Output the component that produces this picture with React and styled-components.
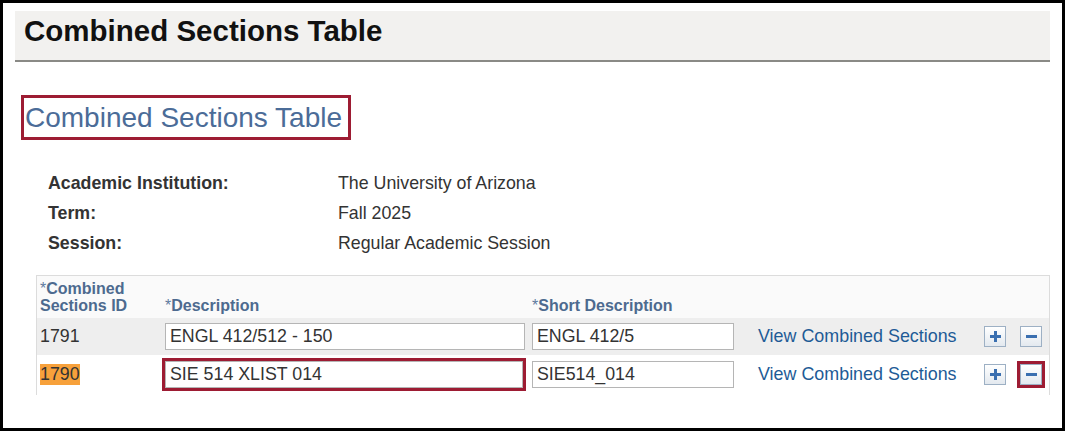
import React from "react";
import styled, { createGlobalStyle } from "styled-components";

const Global = createGlobalStyle`
  html, body { margin: 0; padding: 0; background: #fff; }
  body { font-family: "Liberation Sans", Arial, sans-serif; }
`;

const Frame = styled.div`
  width: 1065px;
  height: 431px;
  box-sizing: border-box;
  border: 3px solid #000;
  padding: 8px 12px 0 12px;
  overflow: hidden;
`;

const PageHeader = styled.div`
  width: 1035px;
  height: 51px;
  box-sizing: border-box;
  background: #f2f1ef;
  border-bottom: 2px solid #8a8a86;
  display: flex;
  align-items: center;
  padding: 0 0 9px 9px;
`;

const PageTitle = styled.h1`
  margin: 0;
  font-size: 29.5px;
  font-weight: bold;
  color: #111;
  line-height: 32px;
`;

const Highlight = styled.div`
  display: inline-block;
  margin: 33px 0 0 6px;
  border: 3px solid #9d1c33;
  padding: 4px 6px 4px 1px;
`;

const SectionTitle = styled.h2`
  margin: 0;
  font-size: 28px;
  font-weight: normal;
  color: #4b6c98;
  line-height: 31px;
`;

const Info = styled.div`
  display: grid;
  grid-template-columns: 290px auto;
  row-gap: 8.5px;
  margin: 33px 0 0 33px;
  font-size: 17.8px;
  line-height: 21.5px;
`;

const Label = styled.div`
  font-weight: bold;
  color: #333;
`;

const Value = styled.div`
  color: #333;
`;

const Grid = styled.div`
  margin: 20px 0 0 21px;
  width: 1014px;
  box-sizing: border-box;
  border: 1px solid #dcdcdc;
  border-bottom: none;
`;

const HeadRow = styled.div`
  display: flex;
  align-items: flex-end;
  height: 42px;
  background: #fafafa;
  padding-bottom: 4px;
  box-sizing: border-box;
`;

const Row = styled.div`
  display: flex;
  align-items: center;
  height: ${(p) => p.$h}px;
  background: ${(p) => (p.$alt ? "#eeeeee" : "#fff")};
`;

const Cell = styled.div`
  width: ${(p) => p.$w}px;
  flex: none;
  box-sizing: border-box;
  padding-left: ${(p) => p.$pl || 0}px;
  display: flex;
  align-items: center;
`;

const HeadCell = styled.div`
  width: ${(p) => p.$w}px;
  flex: none;
  box-sizing: border-box;
  padding-left: ${(p) => p.$pl || 0}px;
  font-size: 16px;
  font-weight: bold;
  color: #4d6a8f;
  line-height: 17px;
`;

const Star = styled.span`
  font-weight: normal;
  color: #5f7b9f;
`;

const IdText = styled.span`
  font-size: 17.8px;
  color: #333;
  background: ${(p) => (p.$mark ? "#f7a13b" : "transparent")};
  line-height: 21px;
`;

const Field = styled.div`
  box-sizing: border-box;
  width: ${(p) => p.$w}px;
  height: 27px;
  border: 1px solid #b5b5b5;
  background: #fff;
  font-size: 17.8px;
  color: #333;
  padding-left: 4px;
  display: flex;
  align-items: center;
`;

const RedWrap = styled.div`
  border: 3px solid #9d1c33;
  padding: 0;
  margin-left: ${(p) => p.$ml || 0}px;
  display: flex;
`;

const Link = styled.a`
  font-size: 17.9px;
  color: #1e5b96;
  text-decoration: none;
`;

const Btn = styled.div`
  width: 22px;
  height: 21px;
  box-sizing: border-box;
  border: 1px solid #9db0c4;
  background: linear-gradient(#ffffff, #e3e9ef);
  display: flex;
  align-items: center;
  justify-content: center;
`;

const BtnBox = styled.div`
  display: flex;
  align-items: center;
  padding: ${(p) => (p.$red ? "0" : "3px")};
  border: ${(p) => (p.$red ? "3px solid #9d1c33" : "0")};
`;

const Buttons = styled.div`
  display: flex;
  align-items: center;
  gap: 8px;
`;

const Plus = () => (
  <svg width="13" height="13" viewBox="0 0 13 13">
    <rect x="5" y="1" width="3" height="11" fill="#3a6fb0" />
    <rect x="1" y="5" width="11" height="3" fill="#3a6fb0" />
  </svg>
);

const Minus = () => (
  <svg width="13" height="13" viewBox="0 0 13 13">
    <rect x="1" y="5" width="11" height="3" fill="#3a6fb0" />
  </svg>
);

export default function App() {
  return (
    <>
      <Global />
      <Frame>
        <PageHeader>
          <PageTitle>Combined Sections Table</PageTitle>
        </PageHeader>
        <Highlight>
          <SectionTitle>Combined Sections Table</SectionTitle>
        </Highlight>
        <Info>
          <Label>Academic Institution:</Label>
          <Value>The University of Arizona</Value>
          <Label>Term:</Label>
          <Value>Fall 2025</Value>
          <Label>Session:</Label>
          <Value>Regular Academic Session</Value>
        </Info>
        <Grid>
          <HeadRow>
            <HeadCell $w={128} $pl={3}>
              <Star>*</Star>Combined
              <br />
              Sections ID
            </HeadCell>
            <HeadCell $w={367}>
              <Star>*</Star>Description
            </HeadCell>
            <HeadCell $w={226}>
              <Star>*</Star>Short Description
            </HeadCell>
          </HeadRow>
          <Row $alt $h={37}>
            <Cell $w={128} $pl={3}>
              <IdText>1791</IdText>
            </Cell>
            <Cell $w={367}>
              <Field $w={360}>ENGL 412/512 - 150</Field>
            </Cell>
            <Cell $w={226}>
              <Field $w={202}>ENGL 412/5</Field>
            </Cell>
            <Cell $w={223}>
              <Link href="#">View Combined Sections</Link>
            </Cell>
            <Buttons>
              <BtnBox><Btn><Plus /></Btn></BtnBox>
              <BtnBox><Btn><Minus /></Btn></BtnBox>
            </Buttons>
          </Row>
          <Row $h={40}>
            <Cell $w={128} $pl={3}>
              <IdText $mark>1790</IdText>
            </Cell>
            <Cell $w={367}>
              <RedWrap $ml={-3}>
                <Field $w={358}>SIE 514 XLIST 014</Field>
              </RedWrap>
            </Cell>
            <Cell $w={226}>
              <Field $w={202}>SIE514_014</Field>
            </Cell>
            <Cell $w={223}>
              <Link href="#">View Combined Sections</Link>
            </Cell>
            <Buttons>
              <BtnBox><Btn><Plus /></Btn></BtnBox>
              <BtnBox $red><Btn><Minus /></Btn></BtnBox>
            </Buttons>
          </Row>
        </Grid>
      </Frame>
    </>
  );
}
